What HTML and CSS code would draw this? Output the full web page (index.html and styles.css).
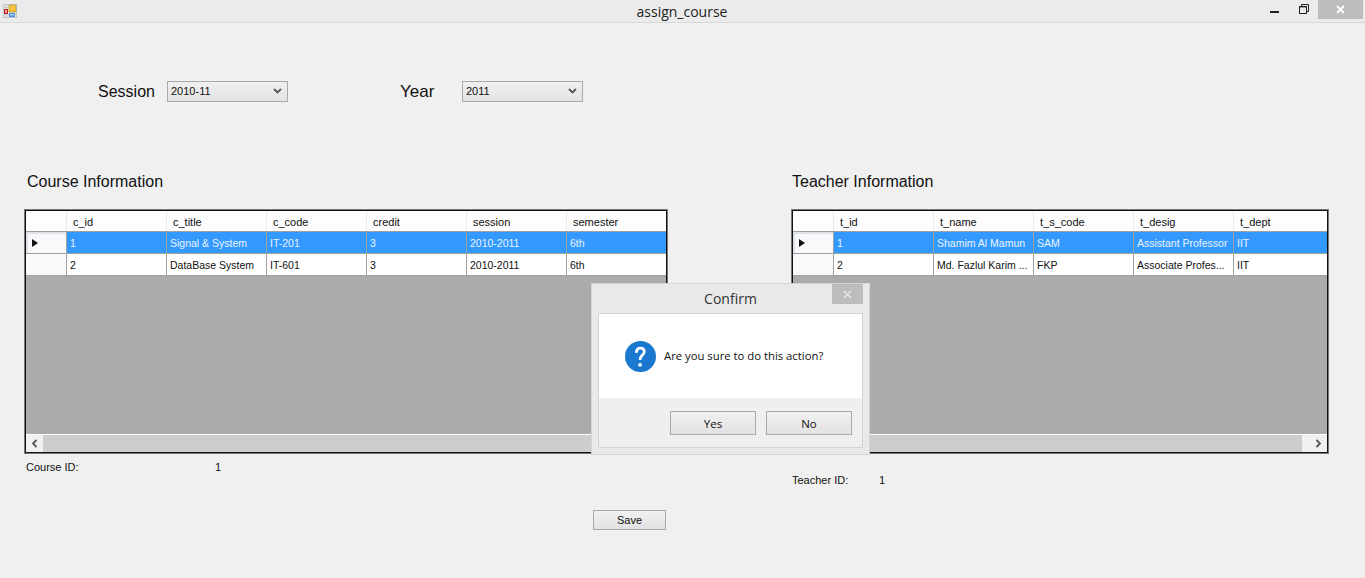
FILE: index.html
```html
<!DOCTYPE html>
<html lang="en">
<head>
    <meta charset="UTF-8">
    <meta name="viewport" content="width=device-width, initial-scale=1.0">
    <title>assign_course</title>
    <link rel="stylesheet" href="styles.css">
</head>
<body>
    <div class="titlebar">
        <svg class="app-icon" width="14" height="14" viewBox="0 0 14 14">
            <rect x="0.5" y="0.5" width="13" height="13" fill="#e8e8e8" stroke="#c4c4c4"/>
            <path d="M0 3.5H6M3.5 0V5M0 10.5H14M3 10V14M10.5 0V14" stroke="#cfcfcf"/>
            <rect x="1" y="5" width="4" height="5" fill="#c01f1f"/>
            <rect x="2" y="6" width="2" height="3" fill="#f0a090"/>
            <rect x="6" y="1" width="7" height="7" fill="#f5c33b" stroke="#b58a1e" stroke-width="0.6"/>
            <rect x="6" y="9" width="6" height="4" fill="#4f8ee0"/>
            <rect x="7" y="10" width="4" height="1.5" fill="#a9cdf5"/>
        </svg>
        <div class="title">assign_course</div>
        <div class="win-buttons">
            <svg class="win-min" width="9" height="2" viewBox="0 0 9 2"><rect width="9" height="2" fill="#222"/></svg>
            <svg class="win-restore" width="10" height="10" viewBox="0 0 10 10">
                <path d="M2.5 2V0.5H9.5V7.5H8" fill="none" stroke="#222"/>
                <rect x="0.5" y="2.5" width="7" height="7" fill="none" stroke="#222" stroke-width="1"/>
                <rect x="0" y="2" width="8" height="1.4" fill="#222"/>
            </svg>
            <div class="win-close">
                <svg width="9" height="9" viewBox="0 0 9 9"><path d="M1 1L8 8M8 1L1 8" stroke="#fff" stroke-width="1.8"/></svg>
            </div>
        </div>
    </div>

    <div class="form">
        <div class="filters">
            <label class="big-label session-label">Session</label>
            <div class="combo session-combo">2010-11<svg width="9" height="6" viewBox="0 0 9 6"><path d="M1 1L4.5 4.5L8 1" fill="none" stroke="#555" stroke-width="1.8"/></svg></div>
            <label class="big-label year-label">Year</label>
            <div class="combo year-combo">2011<svg width="9" height="6" viewBox="0 0 9 6"><path d="M1 1L4.5 4.5L8 1" fill="none" stroke="#555" stroke-width="1.8"/></svg></div>
        </div>

        <div class="panels">
            <div class="panel course-panel">
                <h3>Course Information</h3>
                <div class="grid">
                    <div class="row header">
                        <div class="rowhead"></div>
                        <div class="cell">c_id</div>
                        <div class="cell">c_title</div>
                        <div class="cell">c_code</div>
                        <div class="cell">credit</div>
                        <div class="cell">session</div>
                        <div class="cell">semester</div>
                    </div>
                    <div class="row selected">
                        <div class="rowhead"><span class="arrow"></span></div>
                        <div class="cell">1</div>
                        <div class="cell">Signal &amp; System</div>
                        <div class="cell">IT-201</div>
                        <div class="cell">3</div>
                        <div class="cell">2010-2011</div>
                        <div class="cell">6th</div>
                    </div>
                    <div class="row">
                        <div class="rowhead"></div>
                        <div class="cell">2</div>
                        <div class="cell">DataBase System</div>
                        <div class="cell">IT-601</div>
                        <div class="cell">3</div>
                        <div class="cell">2010-2011</div>
                        <div class="cell">6th</div>
                    </div>
                    <div class="grid-fill"></div>
                    <div class="scrollbar">
                        <div class="sb-btn"><svg width="7" height="9" viewBox="0 0 7 9"><path d="M5.5 1L2 4.5L5.5 8" fill="none" stroke="#555" stroke-width="1.8"/></svg></div>
                        <div class="sb-track"></div>
                    </div>
                </div>
                <div class="id-line course-id"><span class="id-label">Course ID:</span><span>1</span></div>
            </div>

            <div class="panel teacher-panel">
                <h3>Teacher Information</h3>
                <div class="grid">
                    <div class="row header">
                        <div class="rowhead"></div>
                        <div class="cell">t_id</div>
                        <div class="cell">t_name</div>
                        <div class="cell">t_s_code</div>
                        <div class="cell">t_desig</div>
                        <div class="cell">t_dept</div>
                    </div>
                    <div class="row selected">
                        <div class="rowhead"><span class="arrow"></span></div>
                        <div class="cell">1</div>
                        <div class="cell">Shamim Al Mamun</div>
                        <div class="cell">SAM</div>
                        <div class="cell">Assistant Professor</div>
                        <div class="cell">IIT</div>
                    </div>
                    <div class="row">
                        <div class="rowhead"></div>
                        <div class="cell">2</div>
                        <div class="cell">Md. Fazlul Karim ...</div>
                        <div class="cell">FKP</div>
                        <div class="cell">Associate Profes...</div>
                        <div class="cell">IIT</div>
                    </div>
                    <div class="grid-fill"></div>
                    <div class="scrollbar">
                        <div class="sb-track"></div>
                        <div class="sb-btn sb-wide"><svg width="7" height="9" viewBox="0 0 7 9"><path d="M1.5 1L5 4.5L1.5 8" fill="none" stroke="#555" stroke-width="1.8"/></svg></div>
                    </div>
                </div>
                <div class="id-line teacher-id"><span class="id-label">Teacher ID:</span><span>1</span></div>
            </div>
        </div>

        <button class="win-btn save-btn">Save</button>
    </div>

    <div class="dialog">
        <div class="dialog-title">Confirm<div class="dialog-close"><svg width="9" height="9" viewBox="0 0 9 9"><path d="M1 1L8 8M8 1L1 8" stroke="#e6e6e6" stroke-width="1.5"/></svg></div></div>
        <div class="dialog-inner">
            <div class="dialog-msg">
                <svg width="31" height="31" viewBox="0 0 31 31">
                    <circle cx="15.5" cy="15.5" r="15.5" fill="#1a79cf"/>
                    <path d="M11.3 11.8C11.5 8.8 13.2 7.2 15.4 7.2C17.7 7.2 19.3 8.7 19.3 10.8C19.3 12.6 18.1 13.6 16.9 14.6C15.7 15.6 15.1 16.5 15.1 19" fill="none" stroke="#fff" stroke-width="2.7"/>
                    <circle cx="15.1" cy="23.8" r="1.9" fill="#fff"/>
                </svg>
                <span class="dialog-text">Are you sure to do this action?</span>
            </div>
            <div class="dialog-actions">
                <button class="win-btn">Yes</button>
                <button class="win-btn">No</button>
            </div>
        </div>
    </div>
</body>
</html>
```

FILE: styles.css
```css
html, body {
    height: 100%;
}
body {
    margin: 0;
    background-color: #f0f0f0;
    font-family: "Liberation Sans", Arial, sans-serif;
    font-size: 11px;
    color: #111;
    overflow: hidden;
}
.titlebar {
    display: flex;
    align-items: center;
    height: 22px;
    background-color: #ebebeb;
    border-bottom: 1px solid #d9d9d9;
}
.app-icon {
    margin-left: 3px;
    flex: none;
}
.title {
    flex: 1;
    text-align: center;
    font-family: "Open Sans", sans-serif;
    font-size: 14px;
    color: #222;
    padding-left: 77px;
}
.win-buttons {
    display: flex;
    align-items: flex-start;
    align-self: flex-start;
}
.win-min {
    margin-top: 11px;
    margin-right: 20px;
}
.win-restore {
    margin-top: 4px;
    margin-right: 9px;
}
.win-close {
    display: flex;
    align-items: center;
    justify-content: center;
    width: 45px;
    height: 19px;
    margin-right: 2px;
    background-color: #bdbdbd;
}
.form {
    padding-top: 57px;
}
.filters {
    display: flex;
    align-items: center;
    height: 22px;
}
.big-label {
    padding-top: 2px;
    font-size: 16px;
}
.session-label {
    margin-left: 98px;
    width: 69px;
}
.year-label {
    margin-left: 112px;
    width: 62px;
    font-size: 17px;
}
.combo {
    display: flex;
    align-items: center;
    justify-content: space-between;
    box-sizing: border-box;
    width: 121px;
    height: 21px;
    padding: 0 5px 0 3px;
    border: 1px solid #a9a9a9;
    background: linear-gradient(#f0f0f0, #e3e3e3);
    font-size: 11px;
}
.panels {
    display: flex;
    margin-top: 70px;
    margin-left: 24px;
    gap: 123px;
}
.panel h3 {
    margin: 0 0 17px 3px;
    font-size: 16px;
    font-weight: normal;
    line-height: 20px;
}
.teacher-panel h3 {
    margin-left: 1px;
}
.course-panel {
    width: 644px;
}
.teacher-panel {
    width: 538px;
}
.grid {
    display: flex;
    flex-direction: column;
    box-sizing: border-box;
    height: 245px;
    border: 2px solid #111;
    outline: 1px solid #777;
    outline-offset: -1px;
    background-color: #ababab;
    overflow: hidden;
}
.row {
    display: flex;
    flex: none;
    height: 22px;
    background-color: #fff;
    border-bottom: 1px solid #a0a0a0;
    box-sizing: border-box;
    font-size: 10.5px;
}
.row.header {
    height: 21px;
    border-bottom: 1px solid #a0a0a0;
    background-color: #fdfdfd;
    font-size: 11px;
}
.rowhead {
    flex: none;
    display: flex;
    align-items: center;
    box-sizing: border-box;
    width: 41px;
    padding-left: 6px;
    background-color: #f9f9fb;
    border-right: 1px solid #a0a0a0;
}
.header .rowhead {
    border-right-color: #e4e8f0;
    background-color: #fdfdfd;
}
.selected .rowhead {
    box-shadow: inset 2px 2px 0 #dfe3ea;
}
.arrow {
    width: 0;
    height: 0;
    border-top: 4px solid transparent;
    border-bottom: 4px solid transparent;
    border-left: 6px solid #111;
}
.cell {
    flex: none;
    box-sizing: border-box;
    width: 100px;
    padding-left: 3px;
    line-height: 23px;
    border-right: 1px solid #a0a0a0;
    white-space: nowrap;
    overflow: hidden;
}
.header .cell {
    padding-left: 6px;
    border-right-color: #e8ebf2;
}
.selected {
    background-color: #3399ff;
}
.selected .cell {
    color: #eaf4ff;
}
.grid-fill {
    flex: 1;
}
.scrollbar {
    display: flex;
    flex: none;
    height: 17px;
    border-top: 1px solid #fff;
    background-color: #f0f0f0;
}
.sb-btn {
    display: flex;
    align-items: center;
    justify-content: center;
    flex: none;
    width: 17px;
}
.sb-wide {
    justify-content: flex-end;
    width: 25px;
    padding-right: 5px;
    box-sizing: border-box;
}
.sb-track {
    flex: 1;
    background-color: #cdcdcd;
}
.id-line {
    display: flex;
    margin-left: 2px;
}
.course-id {
    margin-top: 7px;
}
.course-id .id-label {
    width: 189px;
}
.teacher-id {
    margin-top: 20px;
    margin-left: 1px;
}
.teacher-id .id-label {
    width: 87px;
}
.win-btn {
    box-sizing: border-box;
    width: 86px;
    height: 24px;
    padding: 0;
    border: 1px solid #a9a9a9;
    background: linear-gradient(#f1f1f1, #e2e2e2);
    font-family: "Open Sans", sans-serif;
    font-size: 11.5px;
    color: #111;
}
.save-btn {
    display: block;
    width: 73px;
    height: 20px;
    margin-left: 593px;
    margin-top: 24px;
    font-family: "Liberation Sans", Arial, sans-serif;
    font-size: 11px;
}
.dialog {
    position: absolute;
    left: 591px;
    top: 283px;
    box-sizing: border-box;
    width: 279px;
    height: 172px;
    padding: 0 6px 6px;
    background-color: #e9e9e9;
    border: 1px solid #d4d4d4;
    display: flex;
    flex-direction: column;
}
.dialog-title {
    position: relative;
    flex: none;
    height: 29px;
    line-height: 29px;
    text-align: center;
    font-family: "Open Sans", sans-serif;
    font-size: 14px;
    color: #333;
}
.dialog-close {
    position: absolute;
    top: 0;
    right: 0;
    display: flex;
    align-items: center;
    justify-content: center;
    width: 31px;
    height: 20px;
    background-color: #bdbdbd;
}
.dialog-inner {
    flex: 1;
    display: flex;
    flex-direction: column;
    border: 1px solid #d4d4d4;
    background-color: #efefef;
}
.dialog-msg {
    display: flex;
    align-items: center;
    gap: 8px;
    height: 84px;
    padding-left: 26px;
    background-color: #fff;
    font-family: "Open Sans", sans-serif;
    font-size: 11.3px;
    color: #111;
}
.dialog-text {
    padding-bottom: 2px;
}
.dialog-actions {
    display: flex;
    justify-content: flex-end;
    gap: 10px;
    padding: 13px 10px 0 0;
}
```
